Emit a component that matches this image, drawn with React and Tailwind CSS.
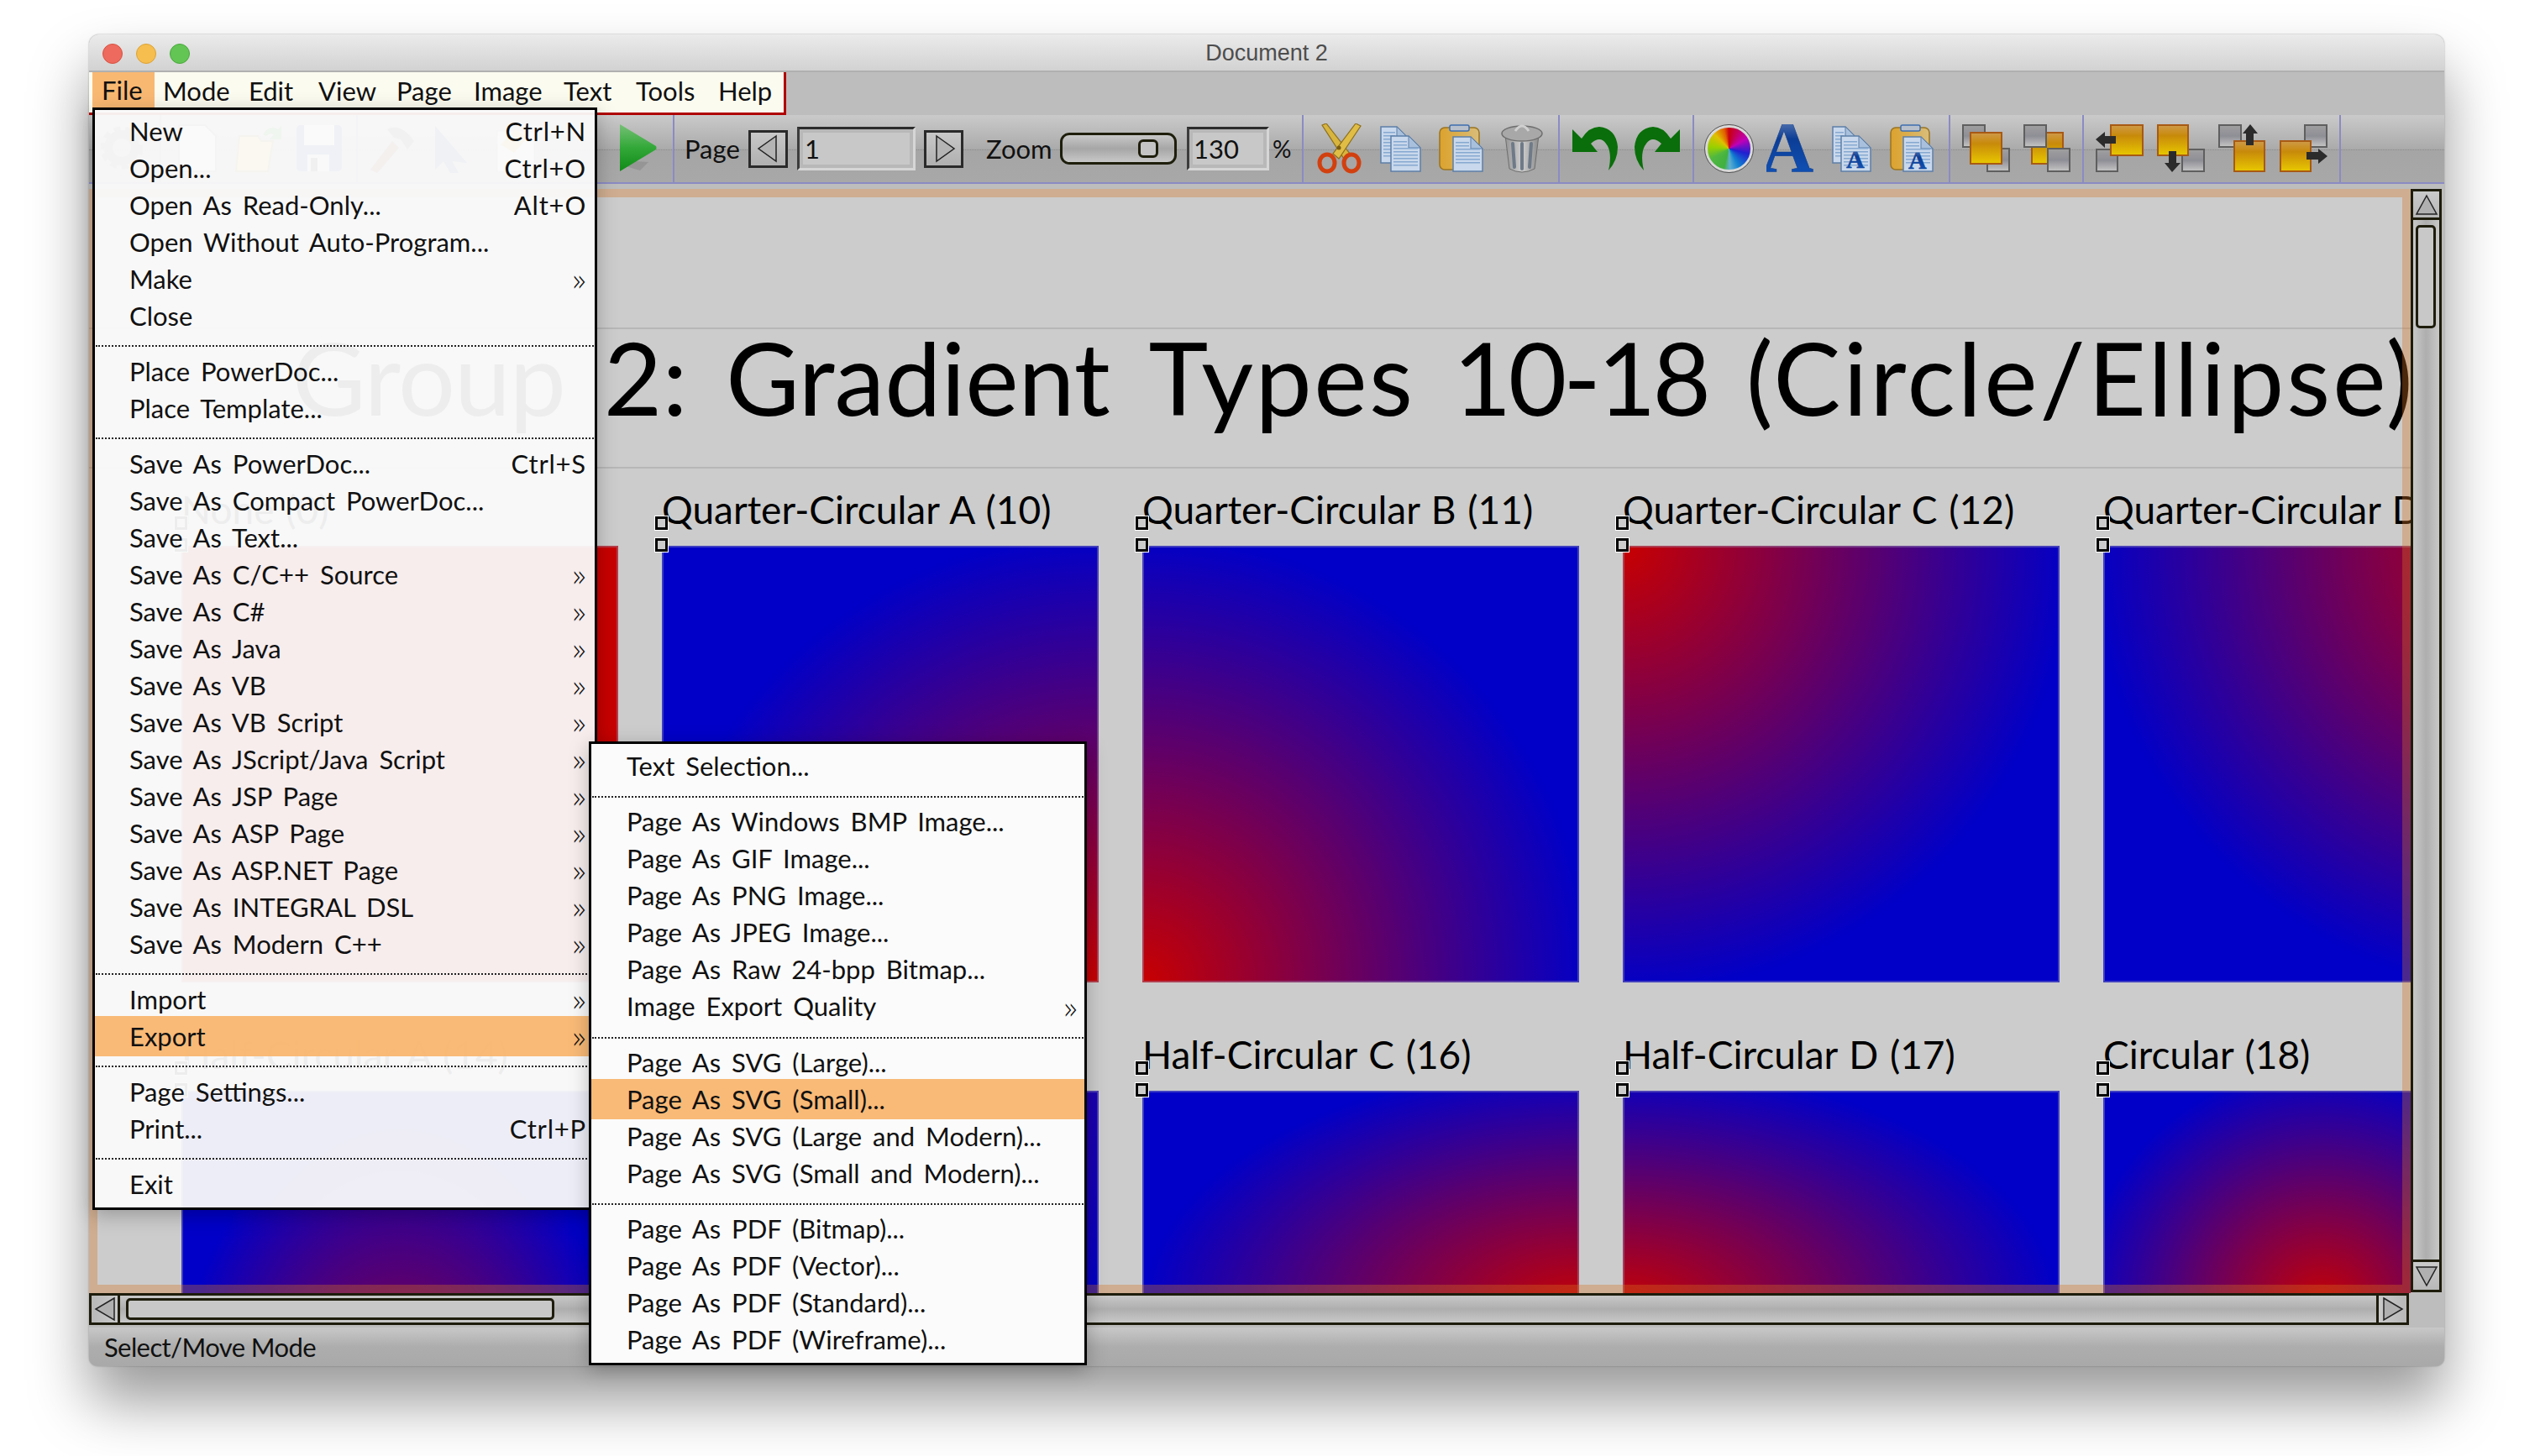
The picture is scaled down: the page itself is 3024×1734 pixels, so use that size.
import React from 'react'

const blue = '#0000c8'
const red = '#c80000'

const tiles = [
  { label: 'None (0)', bg: `linear-gradient(${red}, ${red})` },
  { label: 'Quarter-Circular A (10)', bg: `radial-gradient(circle 535px at 100% 100%, ${red}, ${blue})` },
  { label: 'Quarter-Circular B (11)', bg: `radial-gradient(circle 535px at 0% 100%, ${red}, ${blue})` },
  { label: 'Quarter-Circular C (12)', bg: `radial-gradient(circle 535px at 0% 0%, ${red}, ${blue})` },
  { label: 'Quarter-Circular D (13)', bg: `radial-gradient(circle 535px at 100% 0%, ${red}, ${blue})` },
  { label: 'Half-Circular A (14)', bg: `radial-gradient(ellipse 290px 520px at 50% 100%, ${red}, ${blue})` },
  { label: 'Half-Circular B (15)', bg: `radial-gradient(ellipse 290px 520px at 50% 0%, ${red}, ${blue})` },
  { label: 'Half-Circular C (16)', bg: `radial-gradient(ellipse 520px 290px at 100% 50%, ${red}, ${blue})` },
  { label: 'Half-Circular D (17)', bg: `radial-gradient(ellipse 520px 290px at 0% 50%, ${red}, ${blue})` },
  { label: 'Circular (18)', bg: `radial-gradient(circle 290px at 50% 50%, ${red}, ${blue})` },
]

const fileMenu = [
  ['New', 'Ctrl+N'], ['Open...', 'Ctrl+O'], ['Open As Read-Only...', 'Alt+O'], ['Open Without Auto-Program...'], ['Make', '»'], ['Close'],
  '-',
  ['Place PowerDoc...'], ['Place Template...'],
  '-',
  ['Save As PowerDoc...', 'Ctrl+S'], ['Save As Compact PowerDoc...'], ['Save As Text...'], ['Save As C/C++ Source', '»'], ['Save As C#', '»'],
  ['Save As Java', '»'], ['Save As VB', '»'], ['Save As VB Script', '»'], ['Save As JScript/Java Script', '»'], ['Save As JSP Page', '»'],
  ['Save As ASP Page', '»'], ['Save As ASP.NET Page', '»'], ['Save As INTEGRAL DSL', '»'], ['Save As Modern C++', '»'],
  '-',
  ['Import', '»'], ['Export', '»', true],
  '-',
  ['Page Settings...'], ['Print...', 'Ctrl+P'],
  '-',
  ['Exit'],
]

const exportMenu = [
  ['Text Selection...'],
  '-',
  ['Page As Windows BMP Image...'], ['Page As GIF Image...'], ['Page As PNG Image...'], ['Page As JPEG Image...'], ['Page As Raw 24-bpp Bitmap...'], ['Image Export Quality', '»'],
  '-',
  ['Page As SVG (Large)...'], ['Page As SVG (Small)...', null, true], ['Page As SVG (Large and Modern)...'], ['Page As SVG (Small and Modern)...'],
  '-',
  ['Page As PDF (Bitmap)...'], ['Page As PDF (Vector)...'], ['Page As PDF (Standard)...'], ['Page As PDF (Wireframe)...'],
]

const menuText = 'text-[31px] leading-none [word-spacing:5px] text-[#111] whitespace-nowrap'

const MenuRows = ({ items, indent, sepClass }) => (
  <>
    {items.map((item, i) => {
      if (item === '-') {
        return (
          <div key={i} className={sepClass}>
            <div className="border-t-2 border-dotted border-[#222] mx-[1px]" />
          </div>
        )
      }
      const [text, right, active] = item
      return (
        <div
          key={i}
          className={`flex items-center justify-between ${menuText} ${indent} ${active ? 'h-[48px] -my-[2px] bg-[#f9b670]/95' : 'h-[44px]'}`}
        >
          <span>{text}</span>
          {right === '»' ? (
            <span className="text-[38px] pt-[4px] -mr-[3px] [font-family:'DejaVu_Sans',sans-serif] font-light scale-x-75">»</span>
          ) : right ? (
            <span className="tracking-[0.8px]">{right}</span>
          ) : null}
        </div>
      )
    })}
  </>
)

const Sep = ({ className }) => <div className={`w-[2px] self-stretch bg-[#8b8bc4] ${className}`} />

const Gold = ({ x, y, w, h }) => <rect x={x} y={y} width={w} height={h} fill="url(#goldV)" stroke="#a85a14" strokeWidth="2" />
const Gray = ({ x, y, w, h }) => <rect x={x} y={y} width={w} height={h} fill="url(#grayV)" stroke="#5f5f5f" strokeWidth="2" />

const Doc = ({ x, y, w, h, fold = 14 }) => (
  <g transform={`translate(${x} ${y})`}>
    <path d={`M0 0H${w - fold}L${w} ${fold}V${h}H0Z`} fill="#c9d8ec" stroke="#5d7fa8" strokeWidth="1.5" />
    <path d={`M${w - fold} 0V${fold}H${w}Z`} fill="#a9c0dc" stroke="#5d7fa8" strokeWidth="1" />
    {Array.from({ length: Math.floor((h - 10) / 4) }).map((_, i) => (
      <rect key={i} x="3" y={6 + i * 4} width={i * 4 + 6 < fold ? w - fold - 5 : w - 6} height="1.5" fill="#86a8d0" />
    ))}
  </g>
)

const Board = ({ w, h }) => (
  <>
    <rect x="1" y="4" width={w} height={h} rx="6" fill="url(#goldH)" stroke="#9a7420" strokeWidth="1.5" />
    <rect x="13" y="1" width="23" height="7" rx="2" fill="#b8c0cc" stroke="#3e6fb0" strokeWidth="1.5" />
  </>
)

const LetterA = ({ x, y, size }) => (
  <text x={x} y={y} fontFamily="Liberation Serif" fontWeight="700" fontSize={size} fill="url(#blueA)" stroke="#0f3f90" strokeWidth="0.5">A</text>
)

const Icon = ({ w, h = 58, className = '', children }) => (
  <svg width={w} height={h} viewBox={`0 0 ${w} ${h}`} className={`shrink-0 ${className}`}>
    {children}
  </svg>
)

const Arrow = ({ d }) => <path d={d} fill="#2b2b2b" />

const Field = ({ className, value, pad }) => (
  <div className={`h-[52px] border-[3px] border-t-[#2c2c2c] border-l-[#3c3c3c] border-r-[#d6d6d6] border-b-[#d6d6d6] bg-[#c2c2c2] shrink-0 ${className}`}>
    <div className={`h-full flex items-center border-[4px] border-[#b8b8b8] bg-[#c8c8c8] text-[31px] leading-none text-[#111] ${pad}`}>{value}</div>
  </div>
)

const ArrowBox = ({ className, pts }) => (
  <div className={`h-[45px] w-[47px] border-[3px] border-[#2a2a2a] bg-[linear-gradient(180deg,#c8c8c8,#b0b0b0)] shrink-0 flex items-center justify-center ${className}`}>
    <svg width="30" height="36" viewBox="0 0 30 36">
      <polygon points={pts} fill="#b4b4b4" stroke="#222" strokeWidth="1.5" />
    </svg>
  </div>
)

const Handle = ({ className }) => (
  <div className={`absolute -left-[8px] w-[15px] h-[16px] border-[3px] border-black bg-[#cccccc] outline outline-1 outline-white ${className}`} />
)

const Toolbar = () => (
  <div className="relative h-[82px] shrink-0 border-b-2 border-[#8b8bc4] bg-[linear-gradient(180deg,#cacaca_0%,#ababab_50%,#a5a5a5_51%,#a8a8a8_100%)]">
    <div className="absolute inset-x-0 top-[41px] border-t border-dotted border-[#8c8c8c]" />
    <div className="relative h-full flex items-center text-[31px] text-[#111] leading-none">
      <Icon w={50} className="ml-[14px]">
        <circle cx="25" cy="28" r="16" fill="none" stroke="#777" strokeWidth="10" />
        <circle cx="25" cy="28" r="23" fill="none" stroke="#777" strokeWidth="5" strokeDasharray="8 6" />
      </Icon>
      <Sep className="ml-[20px]" />
      <Icon w={46} className="ml-[20px]"><path d="M1 1H32L45 14V56H1Z" fill="#fff" stroke="#888" strokeWidth="2" /></Icon>
      <Icon w={58} className="ml-[21px]">
        <path d="M6 14H28L32 20H46L40 56H2Z" fill="#f0d050" stroke="#b09030" strokeWidth="2" />
        <path d="M34 12Q42 0 52 6L56 2V18H42L47 12Q42 9 38 14Z" fill="#2a9a2a" />
      </Icon>
      <Icon w={56} className="ml-[15px]">
        <rect x="1" y="1" width="54" height="55" rx="5" fill="#2a58a8" />
        <rect x="10" y="1" width="36" height="24" fill="#fff" />
        <rect x="14" y="36" width="26" height="20" fill="#e8e8e8" />
        <rect x="18" y="40" width="8" height="16" fill="#444" />
      </Icon>
      <Sep className="ml-[16px]" />
      <Icon w={60} className="ml-[11px]">
        <path d="M4 54L30 20L38 28L12 58Z" fill="#704020" />
        <path d="M24 6Q40 -2 56 20L48 30L40 18L32 16Z" fill="#555" />
      </Icon>
      <Icon w={64} className="ml-[3px]"><path d="M18 2L56 46L38 44L46 58L36 58L28 44L18 54Z" fill="#2a4a90" /></Icon>
      <Icon w={61} className="ml-[20px]">
        <rect x="8" y="8" width="44" height="48" fill="#fff" stroke="#999" />
        <path d="M12 24L30 6L44 16L28 34Z" fill="#e8c040" />
      </Icon>
      <Icon w={45} h={60} className="ml-[93px]">
        <defs>
          <linearGradient id="playG" x1="0" y1="0" x2="0" y2="1">
            <stop offset="0" stopColor="#76c076" />
            <stop offset="0.5" stopColor="#32a838" />
            <stop offset="1" stopColor="#108a18" />
          </linearGradient>
        </defs>
        <polygon points="4,50 24,56 34,46 6,44" fill="#8a8a8a" opacity="0.6" />
        <path d="M0 1L43 27Q44 29 43 31L0 57Z" fill="url(#playG)" />
      </Icon>
      <Sep className="ml-[18px]" />
      <span className="ml-[12px] w-[64px]">Page</span>
      <ArrowBox className="ml-[12px]" pts="24,3 3,18 24,33" />
      <Field className="ml-[11px] w-[141px]" value="1" pad="pl-[2px]" />
      <ArrowBox className="ml-[10px]" pts="6,3 27,18 6,33" />
      <span className="ml-[27px] w-[74px]">Zoom</span>
      <div className="ml-[14px] w-[139px] h-[38px] shrink-0 rounded-[11px] border-[3px] border-[#1e1e0c] bg-[linear-gradient(180deg,#c8c8c8,#a6a6a6_50%,#c8c8c8)] flex items-center justify-end pr-[19px]">
        <div className="w-[24px] h-[22px] rounded-[6px] border-[3px] border-[#1e1e0c] bg-[#c4c4c4]" />
      </div>
      <Field className="ml-[12px] w-[98px]" value="130" pad="pl-[1px]" />
      <span className="ml-[4px] w-[24px] text-[28px]">%</span>
      <Sep className="ml-[11px]" />

      <Icon w={55} h={60} className="ml-[15px]">
        <polygon points="7,2 12,0 40,36 33,42" fill="#d8b53e" stroke="#8d6f1c" strokeWidth="1.2" />
        <polygon points="47,0 53,3 27,42 20,36" fill="#e0bd45" stroke="#8d6f1c" strokeWidth="1.2" />
        <ellipse cx="13" cy="47" rx="9" ry="10" fill="none" stroke="#d2400f" strokeWidth="5" />
        <ellipse cx="42" cy="47" rx="9" ry="10" fill="none" stroke="#d2400f" strokeWidth="5" />
        <circle cx="27" cy="29" r="2.5" fill="#7a5c10" />
      </Icon>
      <Icon w={49} className="ml-[21px]">
        <Doc x={1} y={3} w={33} h={43} />
        <Doc x={13} y={14} w={35} h={42} />
      </Icon>
      <Icon w={53} className="ml-[21px]">
        <Board w={47} h={50} />
        <Doc x={17} y={15} w={35} h={41} />
      </Icon>
      <Icon w={50} h={60} className="ml-[21px]">
        <path d="M5 14L10 54Q25 62 40 54L45 14Z" fill="url(#trashG)" stroke="#6e6e6e" />
        <ellipse cx="25" cy="12" rx="24" ry="9" fill="#a8a8a8" stroke="#6e6e6e" strokeWidth="1.5" />
        <path d="M17 9Q25 -3 33 9" fill="none" stroke="#d0d0d0" strokeWidth="3" />
        <path d="M14 24L16 52M25 24V54M36 24L34 52" stroke="#6e7a88" strokeWidth="4" strokeLinecap="round" />
      </Icon>
      <Sep className="ml-[18px]" />
      <Icon w={54} h={52} className="ml-[15px]">
        <path d="M0 3L11 14Q20 0 32 0Q52 2 54 24Q54 40 43 52Q48 30 40 20Q33 10 22 20L30 30L0 30Z" fill="#0a6e0a" />
      </Icon>
      <Icon w={56} h={52} className="ml-[18px] -scale-x-100">
        <path d="M0 3L11 14Q20 0 32 0Q52 2 54 24Q54 40 43 52Q48 30 40 20Q33 10 22 20L30 30L0 30Z" fill="#0a6e0a" />
      </Icon>
      <Sep className="ml-[15px]" />
      <div className="ml-[13px] w-[57px] h-[56px] shrink-0 rounded-full border-[3px] border-[#d8d8d8] outline outline-1 outline-[#555] bg-[conic-gradient(#c80010_0deg,#c000b8_60deg,#2020d0_105deg,#1080d0_150deg,#60b0d0_178deg,#40b040_195deg,#50b840_240deg,#98d000_275deg,#e0c000_315deg,#e06000_345deg,#c80010_360deg)]" />
      <Icon w={59} className="ml-[16px]"><LetterA x={-6} y={56} size={86} /></Icon>
      <Icon w={47} className="ml-[19px]">
        <Doc x={1} y={3} w={29} h={43} />
        <Doc x={11} y={14} w={35} h={42} />
        <LetterA x={17} y={52} size={30} />
      </Icon>
      <Icon w={52} className="ml-[22px]">
        <Board w={46} h={50} />
        <Doc x={16} y={15} w={35} h={41} />
        <LetterA x={22} y={53} size={30} />
      </Icon>
      <Sep className="ml-[18px]" />
      <Icon w={57} className="ml-[14px]">
        <Gray x={1} y={1} w={26} h={26} />
        <Gray x={30} y={29} w={26} h={27} />
        <Gold x={10} y={10} w={37} h={37} />
      </Icon>
      <Icon w={56} className="ml-[16px]">
        <Gold x={10} y={10} w={37} h={37} />
        <Gray x={1} y={1} w={26} h={26} />
        <Gray x={29} y={29} w={26} h={27} />
      </Icon>
      <Sep className="ml-[14px]" />
      <Icon w={58} className="ml-[14px]">
        <Gray x={1} y={30} w={25} h={26} />
        <Gold x={18} y={1} w={38} h={36} />
        <Arrow d="M0 18L11 9V14H24V23H11V28Z" />
      </Icon>
      <Icon w={57} className="ml-[15px]">
        <Gray x={30} y={30} w={26} h={26} />
        <Gold x={1} y={1} w={36} h={36} />
        <Arrow d="M18 57L9 46H14V32H23V46H28Z" />
      </Icon>
      <Icon w={56} className="ml-[16px]">
        <Gray x={1} y={1} w={26} h={26} />
        <Gold x={19} y={20} w={36} h={36} />
        <Arrow d="M38 0L47 11H42V25H33V11H29Z" />
      </Icon>
      <Icon w={57} className="ml-[17px]">
        <Gray x={30} y={1} w={26} h={26} />
        <Gold x={1} y={20} w={36} h={36} />
        <Arrow d="M57 38L46 47V42H32V33H46V29Z" />
      </Icon>
      <Sep className="ml-[14px]" />
    </div>
  </div>
)

const Canvas = () => (
  <div className="relative flex-1 overflow-hidden bg-[#cccccc]">
    <div className="mt-[165px] h-[168px] border-y-2 border-[#b7b7b7] flex items-center pl-[242px] pb-[50px] text-[120px] leading-none text-black whitespace-pre [word-spacing:15px]">
      <span>
        <span className="tracking-[-1px]">Group</span> 2: Gradient <span className="tracking-[2.4px]">Types</span>{' '}
        <span className="tracking-[-4px]">10-18</span> <span className="tracking-[3px]">(Circle/Ellipse)</span>
      </span>
    </div>
    <div className="pl-[110px] grid grid-cols-[repeat(5,520px)] gap-x-[52px] gap-y-[37px] w-max">
      {tiles.map((t) => (
        <div key={t.label} className="relative">
          <div className="h-[92px] flex items-end pb-[20px] text-[46px] leading-none [word-spacing:2px] text-black whitespace-nowrap">{t.label}</div>
          <Handle className="top-[57px]" />
          <Handle className="top-[83px]" />
          {/* gradient comes from the data, one per tile */}
          <div className="h-[520px] border-2 border-[#9a9ab8]/40 bg-origin-border" style={{ backgroundImage: t.bg }} />
        </div>
      ))}
    </div>
    <div className="absolute inset-0 border-[10px] border-[#d4741f]/35" />
  </div>
)

const VScroll = () => (
  <div className="w-[37px] h-[1314px] shrink-0 border-x-[3px] border-[#1e1c0c] flex flex-col bg-[linear-gradient(90deg,#c8c8c8,#aeaeae_50%,#c8c8c8)]">
    <div className="h-[37px] shrink-0 border-b-[3px] border-[#1e1c0c] -mx-[3px] border-x-[3px] border-t-[3px] bg-[linear-gradient(180deg,#cacaca,#b8b8b8)] flex items-center justify-center">
      <svg width="28" height="26" viewBox="0 0 28 26"><polygon points="14,2 26,24 2,24" fill="#b0b0b0" stroke="#222" strokeWidth="1.5" /></svg>
    </div>
    <div className="mt-[6px] mx-[3px] w-[24px] h-[123px] rounded-[5px] border-[3px] border-[#1e1c0c] bg-[#c8c8c8] shrink-0" />
    <div className="flex-1" />
    <div className="h-[39px] shrink-0 -mx-[3px] border-[3px] border-[#1e1c0c] bg-[linear-gradient(180deg,#cacaca,#b8b8b8)] flex items-center justify-center">
      <svg width="28" height="26" viewBox="0 0 28 26"><polygon points="14,24 26,2 2,2" fill="#b0b0b0" stroke="#222" strokeWidth="1.5" /></svg>
    </div>
  </div>
)

const HScroll = () => (
  <div className="h-[38px] shrink-0 flex bg-[#bdbdbd]">
    <div className="w-[2762px] flex border-y-[3px] border-[#1e1c0c] bg-[linear-gradient(180deg,#c8c8c8,#aeaeae_50%,#c8c8c8)]">
      <div className="w-[37px] -my-[3px] shrink-0 border-[3px] border-[#1e1c0c] bg-[linear-gradient(90deg,#b8b8b8,#cacaca)] flex items-center justify-center">
        <svg width="26" height="30" viewBox="0 0 26 30"><polygon points="24,2 2,15 24,28" fill="#b0b0b0" stroke="#222" strokeWidth="1.5" /></svg>
      </div>
      <div className="ml-[7px] my-[3px] w-[510px] rounded-[5px] border-[3px] border-[#1e1c0c] bg-[#c8c8c8] shrink-0" />
      <div className="flex-1" />
      <div className="w-[39px] -my-[3px] shrink-0 border-[3px] border-[#1e1c0c] bg-[linear-gradient(90deg,#cacaca,#b8b8b8)] flex items-center justify-center">
        <svg width="26" height="30" viewBox="0 0 26 30"><polygon points="2,2 24,15 2,28" fill="#b0b0b0" stroke="#222" strokeWidth="1.5" /></svg>
      </div>
    </div>
  </div>
)

export default function App() {
  return (
    <div className="w-[3024px] h-[1734px] overflow-hidden bg-white pt-[41px] pl-[106px] [font-family:Lato,sans-serif]">
      <svg className="absolute w-0 h-0">
        <defs>
          <linearGradient id="goldV" x1="0" y1="0" x2="0" y2="1">
            <stop offset="0" stopColor="#cf9a4a" />
            <stop offset="0.35" stopColor="#c88a0a" />
            <stop offset="1" stopColor="#e8c800" />
          </linearGradient>
          <linearGradient id="goldH" x1="0" y1="0" x2="1" y2="0">
            <stop offset="0" stopColor="#dca22c" />
            <stop offset="1" stopColor="#d9bd7a" />
          </linearGradient>
          <linearGradient id="grayV" x1="0" y1="0" x2="0" y2="1">
            <stop offset="0" stopColor="#a0a0a0" />
            <stop offset="0.5" stopColor="#8e8e96" />
            <stop offset="1" stopColor="#c6c6c6" />
          </linearGradient>
          <linearGradient id="trashG" x1="0" y1="0" x2="1" y2="0">
            <stop offset="0" stopColor="#959595" />
            <stop offset="0.5" stopColor="#cfcfcf" />
            <stop offset="1" stopColor="#8a8a8a" />
          </linearGradient>
          <linearGradient id="blueA" x1="0" y1="0" x2="0" y2="1">
            <stop offset="0" stopColor="#8fa0c0" />
            <stop offset="0.4" stopColor="#0c3d96" />
            <stop offset="1" stopColor="#1158c0" />
          </linearGradient>
        </defs>
      </svg>

      <div className="relative w-[2804px] h-[1586px] flex flex-col rounded-t-[12px] rounded-b-[10px] bg-[#bdbdbd] shadow-[0_42px_70px_rgba(0,0,0,0.4),0_0_2px_rgba(0,0,0,0.35)]">
        {/* title bar */}
        <div className="relative h-[45px] shrink-0 flex items-center justify-center pt-[2px] rounded-t-[12px] border-b-2 border-[#b0b0b0] bg-[linear-gradient(180deg,#ebebeb,#d2d2d2)]">
          <div className="absolute left-[16px] top-[11px] flex gap-[16px]">
            <span className="w-[24px] h-[24px] rounded-full bg-[#ef6a5e] border border-[#d8503f]" />
            <span className="w-[24px] h-[24px] rounded-full bg-[#f6be4f] border border-[#dca233]" />
            <span className="w-[24px] h-[24px] rounded-full bg-[#62c554] border border-[#4aa83c]" />
          </div>
          <span className="text-[27px] text-[#4d4d4d] [font-family:'Liberation_Sans',sans-serif]">Document 2</span>
        </div>

        {/* menu strip */}
        <div className="h-[51px] shrink-0 flex items-start">
          <div className="w-[830px] h-[51px] pl-[4px] flex items-start border-r-[3px] border-b-[3px] border-[#b00000] bg-[#fbfbef] text-[31px] leading-none text-[#111]">
            <div className="w-[74px] h-[42px] pl-[11px] flex items-center bg-[#f9b872]">File</div>
            <div className="h-[44px] flex items-center ml-[10px] w-[102px]">Mode</div>
            <div className="h-[44px] flex items-center w-[83px]">Edit</div>
            <div className="h-[44px] flex items-center w-[93px]">View</div>
            <div className="h-[44px] flex items-center w-[92px]">Page</div>
            <div className="h-[44px] flex items-center w-[107px]">Image</div>
            <div className="h-[44px] flex items-center w-[86px]">Text</div>
            <div className="h-[44px] flex items-center w-[98px]">Tools</div>
            <div className="h-[44px] flex items-center">Help</div>
          </div>
        </div>

        <Toolbar />
        <div className="h-[6px] shrink-0" />

        <div className="flex h-[1315px] shrink-0">
          <Canvas />
          <VScroll />
          <div className="w-[3px] shrink-0" />
        </div>

        <HScroll />

        {/* status bar */}
        <div className="mt-[3px] flex-1 flex items-center pl-[18px] rounded-b-[10px] text-[31px] tracking-[-0.6px] leading-none text-[#111] bg-[linear-gradient(180deg,#c8c8c8,#adadad_50%,#a9a9a9)]">
          Select/Move Mode
        </div>

        {/* open menus */}
        <div className="absolute left-[4px] top-[87px] w-[601px] h-[1313px] border-[3px] border-black bg-[#fafafa]/95 pt-[3px] shadow-[0_6px_22px_rgba(0,0,0,0.25)]">
          <MenuRows items={fileMenu} indent="pl-[41px] pr-[10px]" sepClass="h-[22px] pt-[13px]" />
        </div>
        <div className="absolute left-[595px] top-[842px] w-[593px] h-[743px] border-[3px] border-black bg-[#fbfbfb] pt-[4px] shadow-[0_6px_22px_rgba(0,0,0,0.25)]">
          <MenuRows items={exportMenu} indent="pl-[42px] pr-[8px]" sepClass="h-[22.5px] pt-[14px]" />
        </div>
      </div>
    </div>
  )
}
